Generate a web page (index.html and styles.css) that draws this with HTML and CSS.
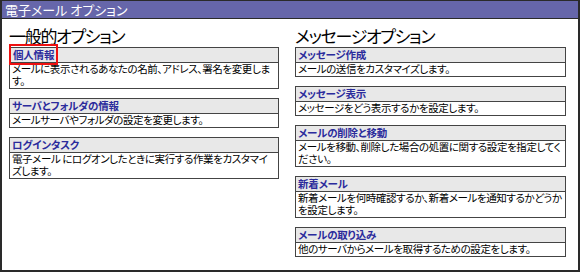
FILE: index.html
```html
<!DOCTYPE html>
<html lang="ja">
<head>
<meta charset="utf-8">
<link rel="stylesheet" href="styles.css">
</head>
<body>
<div class="frame">
  <div class="titlebar">電子メール オプション</div>
  <div class="content">
    <div class="col col-left">
      <h2 class="heading">一般的オプション</h2>
      <div class="card">
        <div class="card-head"><a class="link focused" href="#">個人情報</a></div>
        <div class="card-body">メールに表示されるあなたの名前、アドレス、署名を変更します。</div>
      </div>
      <div class="card">
        <div class="card-head"><a class="link" href="#">サーバとフォルダの情報</a></div>
        <div class="card-body">メールサーバやフォルダの設定を変更します。</div>
      </div>
      <div class="card">
        <div class="card-head"><a class="link" href="#">ログインタスク</a></div>
        <div class="card-body">電子メール にログオンしたときに実行する作業をカスタマイズします。</div>
      </div>
    </div>
    <div class="col col-right">
      <h2 class="heading">メッセージオプション</h2>
      <div class="card">
        <div class="card-head"><a class="link" href="#">メッセージ作成</a></div>
        <div class="card-body">メールの送信をカスタマイズします。</div>
      </div>
      <div class="card">
        <div class="card-head"><a class="link" href="#">メッセージ表示</a></div>
        <div class="card-body">メッセージをどう表示するかを設定します。</div>
      </div>
      <div class="card">
        <div class="card-head"><a class="link" href="#">メールの削除と移動</a></div>
        <div class="card-body">メールを移動、削除した場合の処置に関する設定を指定してください。</div>
      </div>
      <div class="card">
        <div class="card-head"><a class="link" href="#">新着メール</a></div>
        <div class="card-body">新着メールを何時確認するか、新着メールを通知するかどうかを設定します。</div>
      </div>
      <div class="card">
        <div class="card-head"><a class="link" href="#">メールの取り込み</a></div>
        <div class="card-body">他のサーバからメールを取得するための設定をします。</div>
      </div>
    </div>
  </div>
</div>
</body>
</html>
```

FILE: styles.css
```css
html, body {
  margin: 0;
  padding: 0;
  background: #ffffff;
}
body {
  font-family: "Noto Sans CJK JP", "Noto Sans", sans-serif;
  font-feature-settings: "palt";
  font-size: 10.5px;
  color: #000;
}
.frame {
  width: 580px;
  height: 272px;
  box-sizing: border-box;
  border: 2px solid #2a2a2a;
  border-top-width: 1px;
  overflow: hidden;
}
.titlebar {
  height: 17px;
  line-height: 17px;
  background: #6666aa;
  color: #ffffff;
  font-size: 13px;
  padding-left: 3px;
  border-bottom: 1px solid #2a2a2a;
}
.content {
  display: flex;
  gap: 16px;
  padding: 0 12px 0 7px;
}
.col {
  display: flex;
  flex-direction: column;
  gap: 9px;
}
.col-left {
  width: 270px;
}
.col-right {
  width: 271px;
}
.heading {
  margin: 8px 0 -6px 0;
  font-size: 17px;
  font-weight: normal;
  letter-spacing: -1.3px;
  line-height: 17px;
}
.card {
  border: 1px solid #444;
  background: #fff;
}
.card-head {
  background: #e8e8e8;
  border-bottom: 1px solid #444;
  height: 14px;
  line-height: 14px;
  padding-left: 2px;
}
.link {
  color: #2b2b9c;
  font-weight: bold;
  letter-spacing: -0.2px;
  text-decoration: none;
}
.focused {
  outline: 2px solid #ee1111;
  outline-offset: 1px;
  padding: 0 1px;
}
.card-body {
  line-height: 12px;
  letter-spacing: -0.4px;
  padding: 0 2px 1px 2px;
}
```
